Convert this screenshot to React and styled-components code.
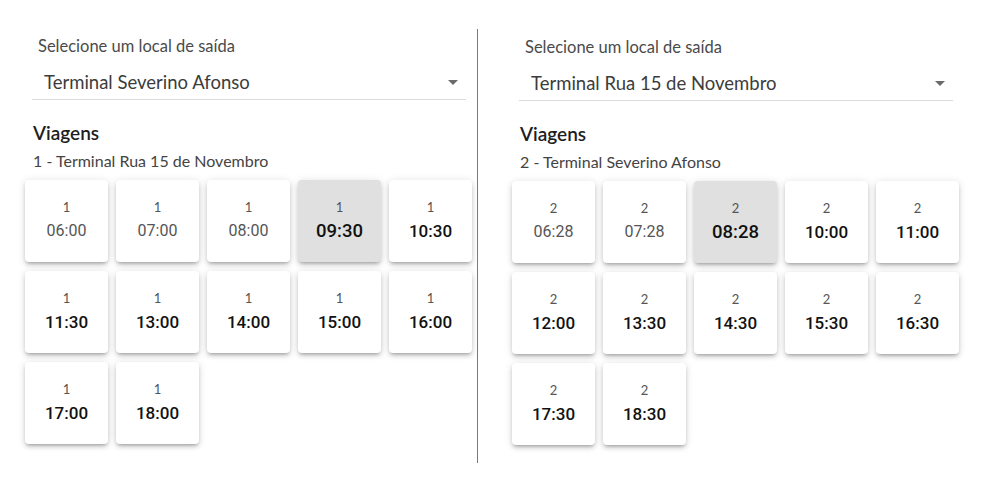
import React from "react";
import styled, { createGlobalStyle } from "styled-components";

const Global = createGlobalStyle`
  html, body { margin: 0; padding: 0; background: #fff; }
  body { font-family: Lato, "Open Sans", sans-serif; color: #222; }
`;

const Page = styled.div`
  display: flex;
  align-items: flex-start;
  padding-top: 29px;
`;

const Panel = styled.section`
  width: 448px;
  padding-left: ${(p) => p.$left}px;
  padding-right: ${(p) => p.$right}px;
  padding-top: ${(p) => p.$top}px;
  display: flex;
  flex-direction: column;
`;

const Divider = styled.div`
  width: 1px;
  height: 434px;
  background: #7a7a7a;
`;

const Field = styled.div`
  margin: 0 7px;
  display: flex;
  flex-direction: column;
`;

const Label = styled.label`
  margin-top: 7px;
  padding-left: 6px;
  font-size: 16.5px;
  line-height: 20px;
  color: #4a4a4a;
`;

const Select = styled.div`
  margin-top: 4px;
  display: flex;
  align-items: center;
  justify-content: space-between;
  padding: 10px 8px 5px 12px;
  font-size: 18.5px;
  line-height: 24px;
  color: #3c3c3c;
  border-bottom: 1px solid #dcdcdc;
`;

const Title = styled.h2`
  margin: 20px 0 0 8px;
  font-size: 19px;
  line-height: 26px;
  font-weight: 600;
  color: #1e1e1e;
`;

const Subtitle = styled.div`
  margin: 5px 0 0 8px;
  font-size: 16px;
  line-height: 20px;
  color: #444;
`;

const Grid = styled.div`
  margin-top: 9px;
  display: grid;
  grid-template-columns: repeat(5, 83px);
  grid-auto-rows: 82px;
  column-gap: 8px;
  row-gap: 9px;
`;

const Card = styled.div`
  background: ${(p) => (p.$selected ? "#e0e0e0" : "#fff")};
  border-radius: 4px;
  box-shadow: 0px 3px 3px -2px rgba(0, 0, 0, 0.2),
    0px 3px 4px 0px rgba(0, 0, 0, 0.14), 0px 1px 8px 0px rgba(0, 0, 0, 0.12);
  display: flex;
  flex-direction: column;
  align-items: center;
  justify-content: center;
  padding-bottom: 2px;
  box-sizing: border-box;
`;

const Line = styled.div`
  font-size: 13px;
  line-height: 16px;
  margin-bottom: 5px;
  color: #555;
`;

const Time = styled.div`
  font-family: Roboto, "Noto Sans", sans-serif;
  line-height: 22px;
  font-size: ${(p) => (p.$state === "selected" ? 18.5 : p.$state === "past" ? 16 : 17)}px;
  font-weight: ${(p) => (p.$state === "past" ? 400 : 500)};
  color: ${(p) => (p.$state === "past" ? "#555" : "#111")};
`;

const Arrow = () => (
  <svg width="10" height="5" viewBox="0 0 10 5" aria-hidden="true">
    <path d="M0 0 L10 0 L5 5 Z" fill="#6b6b6b" />
  </svg>
);

function TripPanel({ origin, line, dest, times, selected, pastCount, left, right, top }) {
  return (
    <Panel $left={left} $right={right} $top={top}>
      <Field>
        <Label>Selecione um local de saída</Label>
        <Select>
          <span>{origin}</span>
          <Arrow />
        </Select>
      </Field>
      <Title>Viagens</Title>
      <Subtitle>
        {line} - {dest}
      </Subtitle>
      <Grid>
        {times.map((t, i) => {
          const state = i === selected ? "selected" : i < pastCount ? "past" : "future";
          return (
            <Card key={t} $selected={i === selected}>
              <Line>{line}</Line>
              <Time $state={state}>{t}</Time>
            </Card>
          );
        })}
      </Grid>
    </Panel>
  );
}

export default function App() {
  return (
    <>
      <Global />
      <Page>
        <TripPanel
          origin="Terminal Severino Afonso"
          line="1"
          dest="Terminal Rua 15 de Novembro"
          times={["06:00", "07:00", "08:00", "09:30", "10:30", "11:30", "13:00", "14:00", "15:00", "16:00", "17:00", "18:00"]}
          selected={3}
          pastCount={3}
          left={25}
          right={4}
          top={0}
        />
        <Divider />
        <TripPanel
          origin="Terminal Rua 15 de Novembro"
          line="2"
          dest="Terminal Severino Afonso"
          times={["06:28", "07:28", "08:28", "10:00", "11:00", "12:00", "13:30", "14:30", "15:30", "16:30", "17:30", "18:30"]}
          selected={2}
          pastCount={2}
          left={34}
          right={0}
          top={1}
        />
      </Page>
    </>
  );
}
